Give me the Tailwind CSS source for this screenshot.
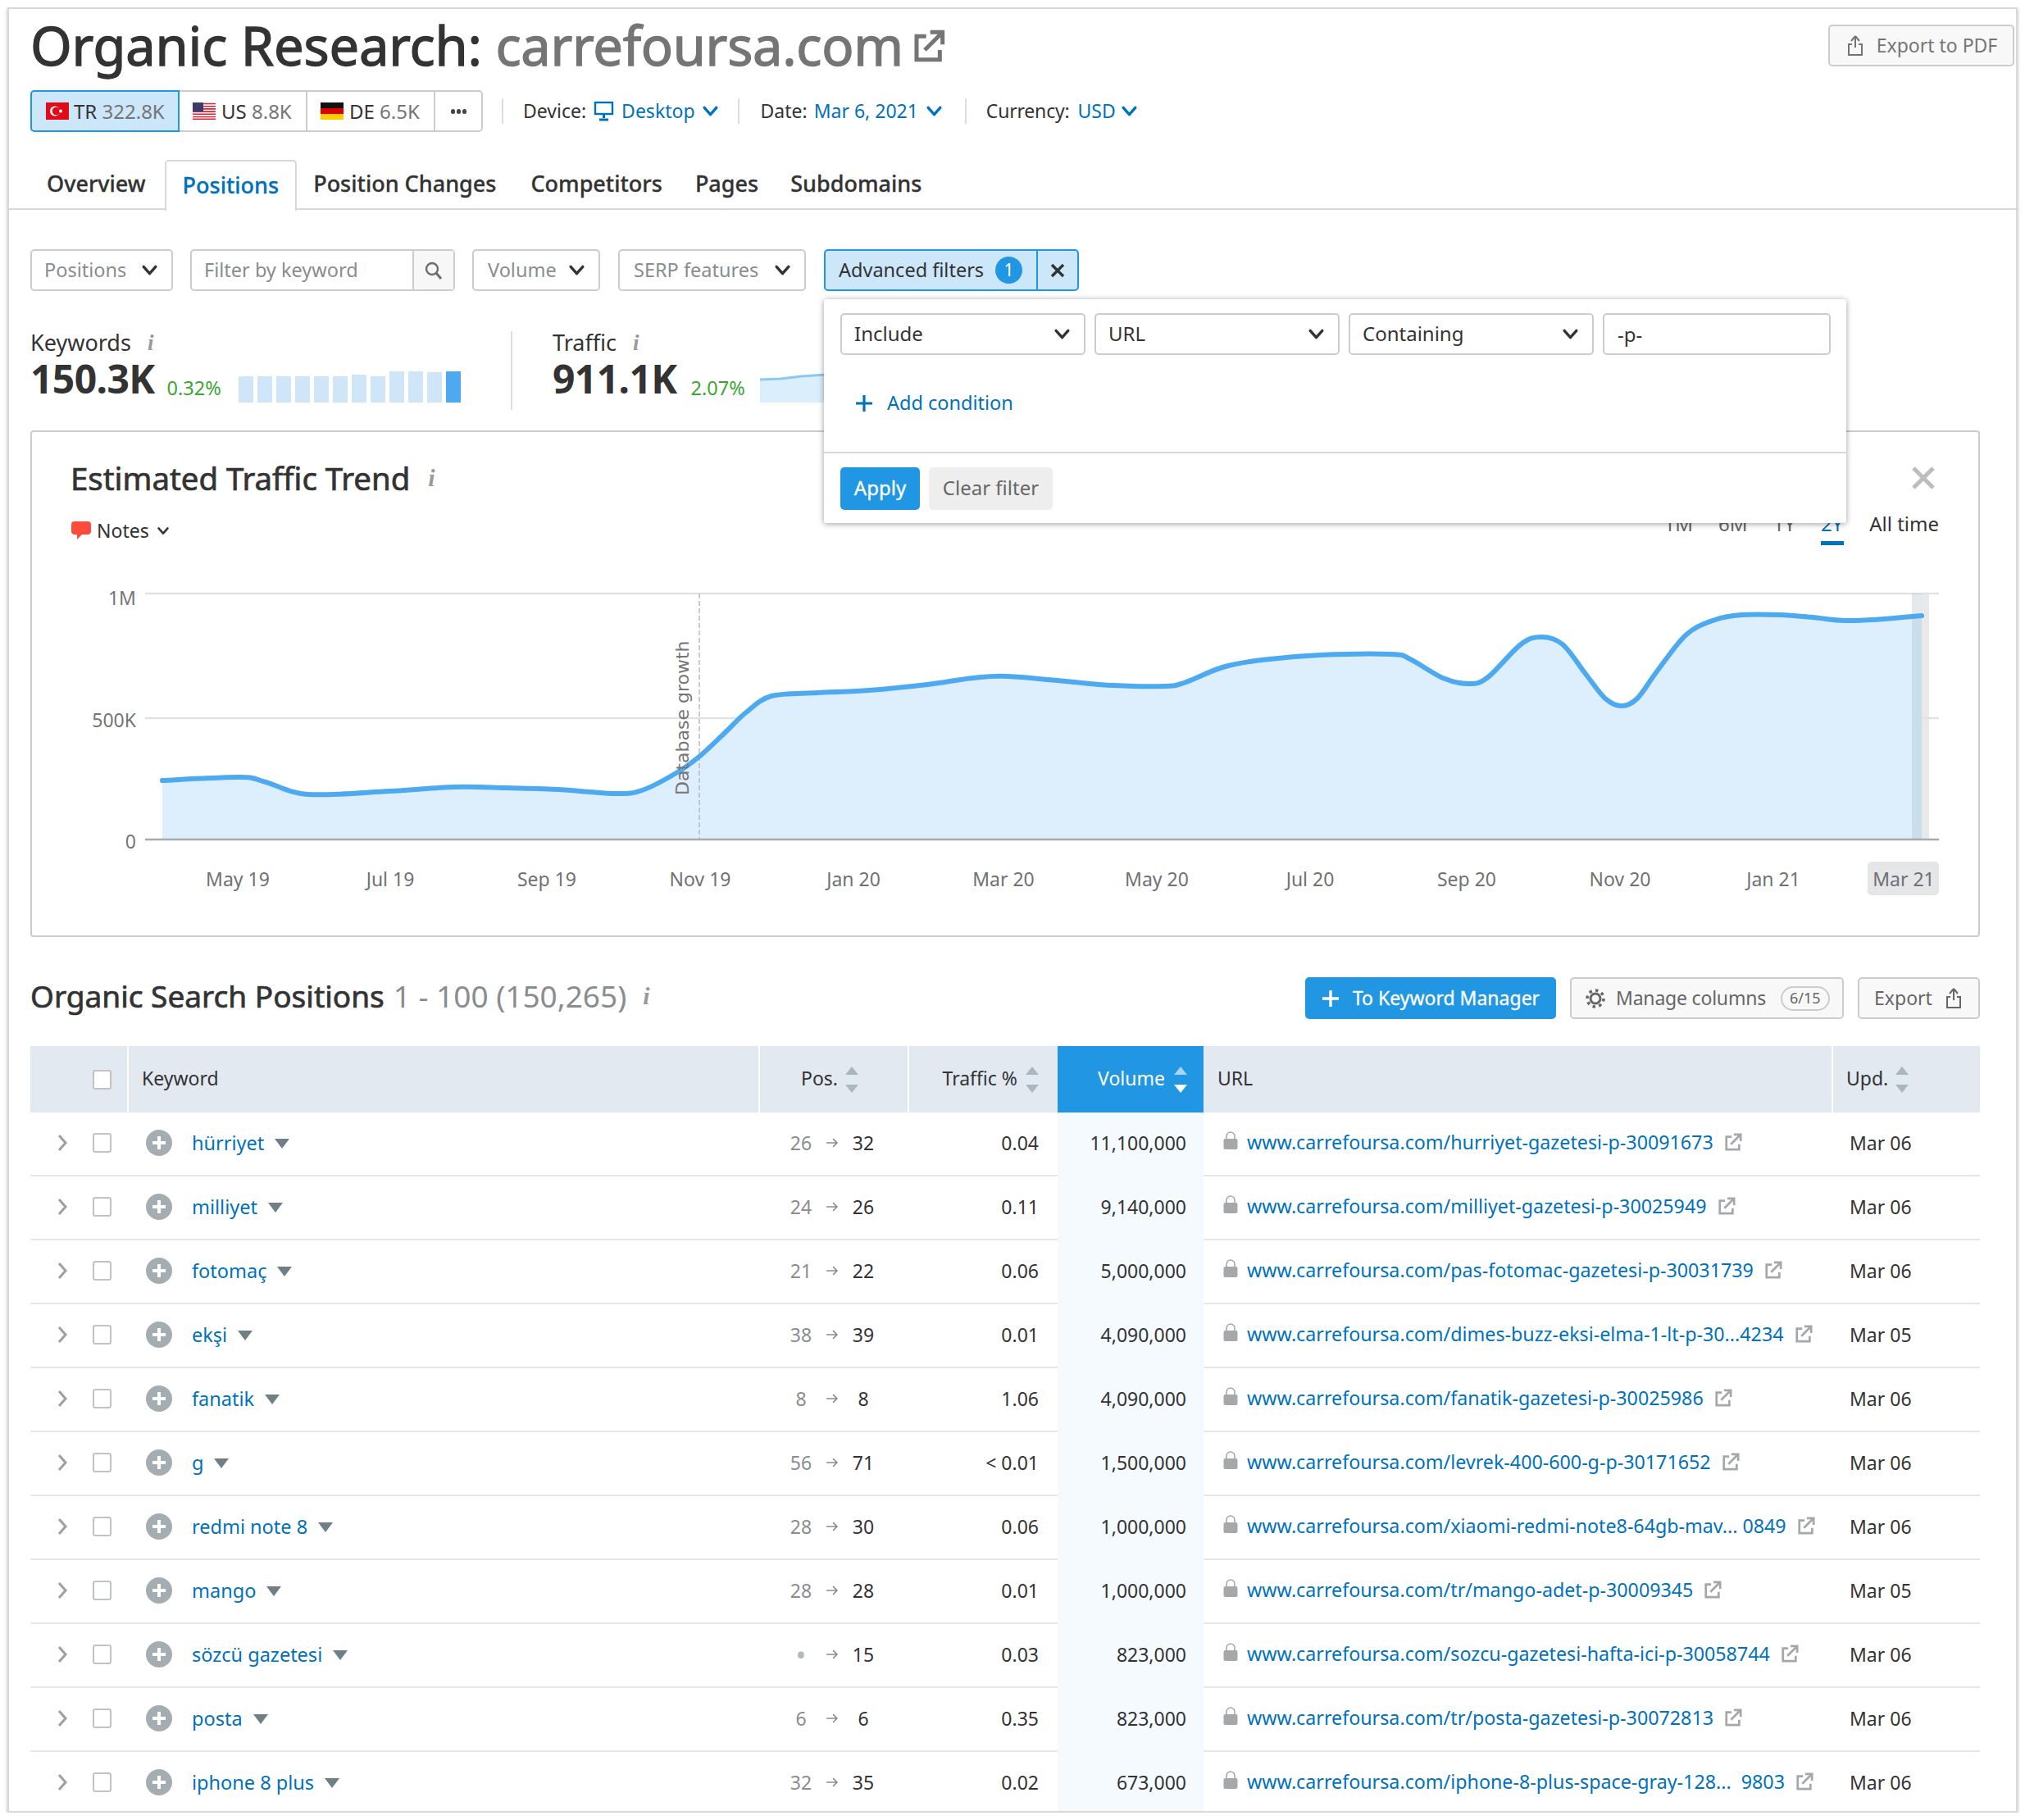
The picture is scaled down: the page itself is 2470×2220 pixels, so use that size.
<!DOCTYPE html>
<html lang="en">
<head>
    <meta charset="UTF-8">
    <title>Organic Research: carrefoursa.com</title>
    <script src="https://cdn.jsdelivr.net/npm/@tailwindcss/browser@4"></script>
</head>
<body class="bg-white text-[#333] font-['Noto_Sans',sans-serif]">

<!-- shared icons -->
<svg width="0" height="0" class="absolute">
    <symbol id="chev" viewBox="0 0 20 14"><path d="M3 3l7 8 7-8" fill="none" stroke="currentColor" stroke-width="3.2" stroke-linecap="round" stroke-linejoin="round"/></symbol>
    <symbol id="ext" viewBox="0 0 24 24"><path d="M10 5H3v17h17v-7" fill="none" stroke="currentColor" stroke-width="3"/><path d="M9 15L21 3M13 2h9v9" fill="none" stroke="currentColor" stroke-width="3"/></symbol>
    <symbol id="up" viewBox="0 0 24 28"><path d="M12 2l-5 6M12 2l5 6M12 2v14M8 12H4v13h16V12h-4" fill="none" stroke="currentColor" stroke-width="2"/></symbol>
    <symbol id="lock" viewBox="0 0 20 24"><path d="M5 11V7a5 5 0 0 1 10 0v4" fill="none" stroke="currentColor" stroke-width="1.6"/><rect x="1.5" y="10" width="17" height="13" rx="2" fill="currentColor"/></symbol>
</svg>

<div class="w-[2452px] h-[2202px] ml-[9px] mt-[9px] border-2 border-[#d8d8d8] shadow-[0_2px_4px_rgba(0,0,0,0.25)] overflow-hidden relative">

    <!-- Header -->
    <header class="pl-[26px] pr-[2px] pt-[19px] border-b-2 border-[#d8d8d8] h-[245px]">
        <div class="flex justify-between items-center h-[51px]">
            <h1 class="flex items-center text-[65px] tracking-[-0.2px] leading-none text-[#333] [-webkit-text-stroke:1.3px_currentColor]">
                Organic Research:&nbsp;<span class="text-[#757575] tracking-[-0.3px]">carrefoursa.com</span>
                <svg class="w-[40px] h-[40px] ml-[11px] text-[#757575]"><use href="#ext"/></svg>
            </h1>
            <button class="w-[227px] h-[51px] flex items-center justify-center gap-[14px] text-[23px] text-[#757575] bg-[#f8f8f8] border-2 border-[#ccc] rounded-[5px]">
                <svg class="w-[24px] h-[28px]"><use href="#up"/></svg>
                Export to PDF
            </button>
        </div>

        <div class="flex items-center mt-[29px] h-[51px] text-[23px]">
            <div class="flex h-full border-2 border-[#ccc] rounded-[5px] w-[552px] text-[24px]">
                <div class="w-[182px] -m-[2px] mr-0 flex items-center pl-[17px] gap-[6px] bg-[#cce6fa] border-2 border-[#2196e3] rounded-l-[5px]">
                    <svg class="w-[28px] h-[21px]" viewBox="0 0 28 21"><rect width="28" height="21" fill="#e30a17"/><circle cx="11" cy="10.5" r="6" fill="#fff"/><circle cx="12.5" cy="10.5" r="4.8" fill="#e30a17"/><circle cx="18" cy="10.5" r="2" fill="#fff"/></svg>
                    <span>TR <span class="text-[#757575]">322.8K</span></span>
                </div>
                <div class="w-[156px] flex items-center pl-[16px] gap-[7px] border-r-2 border-[#ccc]">
                    <svg class="w-[28px] h-[21px]" viewBox="0 0 28 21"><rect width="28" height="21" fill="#fff"/><path d="M0 1.5h28M0 4.7h28M0 7.9h28M0 11.1h28M0 14.3h28M0 17.5h28M0 20.3h28" stroke="#d3283c" stroke-width="1.6"/><rect width="13" height="11" fill="#3c3b6e"/></svg>
                    <span>US <span class="text-[#757575]">8.8K</span></span>
                </div>
                <div class="w-[156px] flex items-center pl-[16px] gap-[7px] border-r-2 border-[#ccc]">
                    <svg class="w-[28px] h-[21px]" viewBox="0 0 28 21"><rect width="28" height="7" fill="#111"/><rect y="7" width="28" height="7" fill="#dd0000"/><rect y="14" width="28" height="7" fill="#ffce00"/></svg>
                    <span>DE <span class="text-[#757575]">6.5K</span></span>
                </div>
                <div class="flex-1 flex items-center justify-center gap-[2px]">
                    <i class="w-[5px] h-[6px] rounded-full bg-[#444]"></i><i class="w-[5px] h-[6px] rounded-full bg-[#444]"></i><i class="w-[5px] h-[6px] rounded-full bg-[#444]"></i>
                </div>
            </div>
            <div class="w-[2px] h-[31px] bg-[#ddd] ml-[23px] mr-[24px]"></div>
            <span>Device:</span>
            <svg class="w-[25px] h-[25px] ml-[9px] mr-[9px] text-[#0071bc]" viewBox="0 0 25 25"><rect x="2" y="2" width="21" height="14" fill="none" stroke="currentColor" stroke-width="2.4"/><path d="M12.5 16v5M7 23h11" stroke="currentColor" stroke-width="3"/></svg>
            <span class="text-[#0071bc]">Desktop</span>
            <svg class="w-[21px] h-[15px] ml-[8px] text-[#0071bc]"><use href="#chev"/></svg>
            <div class="w-[2px] h-[31px] bg-[#ddd] ml-[23px] mr-[26px]"></div>
            <span>Date:</span>
            <span class="text-[#0071bc] ml-[8px]">Mar 6, 2021</span>
            <svg class="w-[21px] h-[15px] ml-[9px] text-[#0071bc]"><use href="#chev"/></svg>
            <div class="w-[2px] h-[31px] bg-[#ddd] ml-[27px] mr-[24px] shrink-0"></div>
            <span class="tracking-[-0.2px]">Currency:</span>
            <span class="text-[#0071bc] ml-[10px]">USD</span>
            <svg class="w-[21px] h-[15px] ml-[6px] text-[#0071bc]"><use href="#chev"/></svg>
        </div>

        <nav class="flex mt-[32px] h-[62px] items-end text-[27px] font-medium text-[#333] [-webkit-text-stroke:0.3px_currentColor]">
            <a class="pl-[20px] pr-[23px] pb-[2px] h-[60px] flex items-center">Overview</a>
            <a class="px-[20px] pb-[2px] h-[62px] -mb-[2px] flex items-center text-[#0071bc] bg-white border-2 border-b-0 border-[#d8d8d8] rounded-t-[5px]">Positions</a>
            <a class="pl-[20px] pr-[21px] pb-[2px] h-[60px] flex items-center">Position Changes</a>
            <a class="px-[21px] pb-[2px] h-[60px] flex items-center">Competitors</a>
            <a class="px-[19px] pb-[2px] h-[60px] flex items-center">Pages</a>
            <a class="px-[20px] pb-[2px] h-[60px] flex items-center">Subdomains</a>
        </nav>
    </header>

    <main class="pl-[26px] pr-[44px]">
        <!-- Filters -->
        <div class="flex mt-[48px] h-[51px] text-[23.5px] text-[#898d90]">
            <div class="w-[174px] flex items-center justify-between pl-[15px] pr-[16px] border-2 border-[#ccc] rounded-[5px]">Positions <svg class="w-[21px] h-[15px] text-[#333]"><use href="#chev"/></svg></div>
            <div class="w-[323px] ml-[21px] flex border-2 border-[#ccc] rounded-[5px]">
                <div class="flex-1 flex items-center pl-[15px]">Filter by keyword</div>
                <div class="w-[50px] flex items-center justify-center bg-[#f7f7f7] border-l-2 border-[#ccc]">
                    <svg class="w-[24px] h-[24px] text-[#6c6e6f]" viewBox="0 0 24 24"><circle cx="10" cy="10" r="7" fill="none" stroke="currentColor" stroke-width="2.4"/><path d="M15 15l6 7" stroke="currentColor" stroke-width="3"/></svg>
                </div>
            </div>
            <div class="w-[156px] ml-[21px] flex items-center justify-between pl-[17px] pr-[16px] border-2 border-[#ccc] rounded-[5px]">Volume <svg class="w-[21px] h-[15px] text-[#333]"><use href="#chev"/></svg></div>
            <div class="w-[229px] ml-[22px] flex items-center justify-between pl-[17px] pr-[16px] border-2 border-[#ccc] rounded-[5px]">SERP features <svg class="w-[21px] h-[15px] text-[#333]"><use href="#chev"/></svg></div>
            <div class="w-[311px] ml-[22px] flex bg-[#cce6fa] border-2 border-[#2196e3] rounded-[5px] text-[#333]">
                <div class="flex-1 flex items-center pl-[16px] gap-[14px]">Advanced filters <span class="w-[33px] h-[33px] rounded-full bg-[#2196e3] text-white text-[21px] flex items-center justify-center">1</span></div>
                <div class="w-[50px] flex items-center justify-center border-l-2 border-[#2196e3]">
                    <svg class="w-[20px] h-[20px]" viewBox="0 0 20 20"><path d="M3 3l14 14M17 3L3 17" stroke="#333" stroke-width="3.4"/></svg>
                </div>
            </div>
        </div>

        <!-- Stats -->
        <div class="flex mt-[49px] h-[96px]">
            <div class="w-[588px] border-r-2 border-[#ddd]">
                <div class="text-[27px] leading-[28px] flex items-center gap-[20px]">Keywords <span class="font-['Liberation_Serif',serif] italic font-bold text-[#999]">i</span></div>
                <div class="flex items-end mt-[7px]">
                    <span class="text-[48px] font-bold leading-[46px] tracking-[-0.6px]">150.3K</span>
                    <span class="text-[23.5px] text-[#3da535] ml-[15px] leading-[30px] w-[87px] -mb-[3px]">0.32%</span>
                    <div id="bars" class="flex items-end gap-[5px] h-[38px] -mb-[6px]"></div>
                </div>
            </div>
            <div class="pl-[49px] flex-1">
                <div class="text-[27px] leading-[28px] flex items-center gap-[20px]">Traffic <span class="font-['Liberation_Serif',serif] italic font-bold text-[#999]">i</span></div>
                <div class="flex items-end mt-[7px] relative">
                    <span class="text-[48px] font-bold leading-[46px] tracking-[-0.6px]">911.1K</span>
                    <span class="text-[23.5px] text-[#3da535] ml-[17px] leading-[30px] w-[84px] -mb-[3px]">2.07%</span>
                    <svg class="w-[80px] h-[38px] -mb-[6px]" viewBox="0 0 80 38"><path d="M0 10L25 9 50 6 80 4V38H0Z" fill="#dbeefc"/><path d="M0 10L25 9 50 6 80 4" fill="none" stroke="#8cc8f4" stroke-width="3"/></svg>
                </div>
            </div>
        </div>

        <!-- Estimated Traffic Trend -->
        <section class="mt-[25px] h-[618px] border-2 border-[#ccc] rounded-[4px]">
            <div class="flex justify-between h-[172px] pl-[47px] pr-[48px]">
                <div>
                    <h2 class="mt-[35px] text-[38.4px] leading-[42px] flex items-center gap-[22px] [-webkit-text-stroke:0.7px_currentColor]">Estimated Traffic Trend <span class="font-['Liberation_Serif',serif] italic font-bold text-[30px] text-[#999] [-webkit-text-stroke:0]">i</span></h2>
                    <div class="mt-[28px] flex items-center text-[23px] leading-[30px]">
                        <svg class="w-[26px] h-[26px] mr-[6px]" viewBox="0 0 26 26"><path d="M5 2h16a4 4 0 0 1 4 4v8a4 4 0 0 1-4 4h-7l-6 6v-6H5a4 4 0 0 1-4-4V6a4 4 0 0 1 4-4z" fill="#ff4b3a"/></svg>
                        Notes
                        <svg class="w-[16px] h-[11px] ml-[9px]"><use href="#chev"/></svg>
                    </div>
                </div>
                <div class="flex flex-col items-end">
                    <svg class="w-[30px] h-[30px] mt-[41px] mr-[4px] text-[#bdbdbd]" viewBox="0 0 30 30"><path d="M3 3l24 24M27 3L3 27" stroke="currentColor" stroke-width="5"/></svg>
                    <div class="mt-[26px] flex gap-[31px] text-[24px] leading-[30px]">
                        <span class="text-[#666]">1M</span><span class="text-[#666]">6M</span><span class="text-[#666]">1Y</span>
                        <span class="text-[#0071bc] relative">2Y<i class="absolute left-0 top-[36px] w-[28px] h-[5px] bg-[#0071bc]"></i></span>
                        <span class="ml-[1px]">All time</span>
                    </div>
                </div>
            </div>
            <svg id="chart" class="w-[2374px] h-[400px]" viewBox="39 700 2374 400" font-size="23" fill="#757575">
                <rect x="2278" y="1052" width="87" height="41" rx="5" fill="#e4e6e7"/>
                <path d="M177 725H2365M177 877H2365" stroke="#e2e2e2" stroke-width="2.5"/>
                <path id="area" fill="#dbeefc" fill-opacity="0.95"/>
                <rect x="2332" y="725" width="12" height="300" fill="#8fa6b8" fill-opacity="0.25"/>
                <rect x="2344" y="725" width="9" height="300" fill="#e2e4e6" fill-opacity="0.8"/>
                <path d="M853 725V1025" stroke="#bbb" stroke-width="1.5" stroke-dasharray="6 3"/>
                <path id="line" fill="none" stroke="#4eaaf0" stroke-width="6" stroke-linecap="round"/>
                <path d="M177 1025H2365" stroke="#a9acae" stroke-width="2.5"/>
                <text x="840" y="971" transform="rotate(-90 840 971)" font-family="DejaVu Sans" font-size="22" fill="#757575">Database growth</text>
                <g text-anchor="end">
                    <text x="166" y="739">1M</text><text x="166" y="888">500K</text><text x="166" y="1036">0</text>
                </g>
                <g text-anchor="middle" fill="#6f7173">
                    <text x="290" y="1082">May 19</text><text x="476" y="1082">Jul 19</text><text x="667" y="1082">Sep 19</text><text x="854" y="1082">Nov 19</text>
                    <text x="1041" y="1082">Jan 20</text><text x="1224" y="1082">Mar 20</text><text x="1411" y="1082">May 20</text><text x="1598" y="1082">Jul 20</text>
                    <text x="1789" y="1082">Sep 20</text><text x="1976" y="1082">Nov 20</text><text x="2163" y="1082">Jan 21</text><text x="2322" y="1082">Mar 21</text>
                </g>
            </svg>
        </section>

        <!-- Organic Search Positions -->
        <div class="flex items-center justify-between mt-[49px] h-[51px]">
            <h2 class="text-[37px] -mt-[6px] flex items-center [-webkit-text-stroke:0.7px_currentColor]">Organic Search Positions
                <span class="text-[#898d90] ml-[11px] [-webkit-text-stroke:0]">1 - 100 (150,265)</span>
                <span class="font-['Liberation_Serif',serif] italic font-bold text-[30px] text-[#999] ml-[20px] [-webkit-text-stroke:0]">i</span>
            </h2>
            <div class="flex gap-[17px] text-[23px] h-full">
                <button class="w-[306px] rounded-[5px] bg-[#2196e3] text-white flex items-center justify-center gap-[16px] [-webkit-text-stroke:0.3px_currentColor]">
                    <svg class="w-[22px] h-[22px]" viewBox="0 0 22 22"><path d="M11 1v20M1 11h20" stroke="#fff" stroke-width="3.4"/></svg>
                    To Keyword Manager
                </button>
                <button class="w-[334px] rounded-[5px] border-2 border-[#ccc] bg-[#f8f8f8] text-[#666] flex items-center pl-[16px] gap-[12px]">
                    <svg class="w-[26px] h-[26px]" viewBox="0 0 26 26"><circle cx="13" cy="13" r="6" fill="none" stroke="#666" stroke-width="3"/><circle cx="13" cy="13" r="10" fill="none" stroke="#666" stroke-width="3.5" stroke-dasharray="3.5 4.3"/></svg>
                    <span class="tracking-[-0.2px]">Manage columns</span>
                    <span class="ml-[6px] px-[9px] h-[30px] rounded-full border-2 border-[#ccc] text-[18px] flex items-center">6/15</span>
                </button>
                <button class="w-[149px] rounded-[5px] border-2 border-[#ccc] bg-[#f8f8f8] text-[#666] flex items-center justify-center gap-[14px]">
                    Export
                    <svg class="w-[24px] h-[28px]"><use href="#up"/></svg>
                </button>
            </div>
        </div>

        <!-- Positions table -->
        <div class="mt-[33px] w-[2378px]">
            <div class="grid grid-cols-[120px_768px_182px_183px_178px_766px_181px] h-[81px] bg-[#e2e9f1] text-[23px] text-[#333] pb-[2px]">
                <div class="flex items-center pl-[76px] border-r-2 border-white -mb-[2px]"><span class="w-[23px] h-[24px] bg-white border-2 border-[#bfc3c6] rounded-[3px]"></span></div>
                <div class="flex items-center pl-[16px]">Keyword</div>
                <div class="flex items-center pl-[50px] gap-[7px] border-l-2 border-white -mb-[2px]"><span class="-mt-[2px]">Pos.</span>
                    <svg class="w-[20px] h-[34px]" viewBox="0 0 20 34"><path d="M10 1l8 10H2zM10 33l8-10H2z" fill="#a9b7c2"/></svg></div>
                <div class="flex items-center justify-end pr-[21px] gap-[8px] border-l-2 border-white -mb-[2px]"><span class="-mt-[2px]">Traffic %</span>
                    <svg class="w-[20px] h-[34px]" viewBox="0 0 20 34"><path d="M10 1l8 10H2zM10 33l8-10H2z" fill="#a9b7c2"/></svg></div>
                <div class="flex items-center justify-end pr-[18px] gap-[9px] bg-[#2196e3] text-white -mb-[2px]"><span class="-mt-[2px]">Volume</span>
                    <svg class="w-[20px] h-[34px]" viewBox="0 0 20 34"><path d="M10 1l8 10H2z" fill="#a8d6f5"/><path d="M10 33l8-10H2z" fill="#fff"/></svg></div>
                <div class="flex items-center pl-[17px]">URL</div>
                <div class="flex items-center pl-[16px] gap-[7px] border-l-2 border-white -mb-[2px]"><span class="-mt-[2px]">Upd.</span>
                    <svg class="w-[20px] h-[34px]" viewBox="0 0 20 34"><path d="M10 1l8 10H2zM10 33l8-10H2z" fill="#a9b7c2"/></svg></div>
            </div>
            <div id="rows"></div>
        </div>
    </main>

    <!-- Advanced filters dropdown -->
    <div class="absolute left-[994px] top-[354px] w-[1247px] h-[273px] bg-white rounded-[3px] shadow-[0_1px_7px_rgba(0,0,0,0.4)] text-[24px] z-10">
        <div class="flex gap-[11px] pl-[20px] pt-[17px] h-[188px] border-b-2 border-[#d8d8d8]">
            <div class="w-[299px] h-[51px] flex items-center justify-between pl-[15px] pr-[16px] border-2 border-[#ccc] rounded-[5px]"><span class="-mt-[2px]">Include</span> <svg class="w-[21px] h-[15px]"><use href="#chev"/></svg></div>
            <div class="w-[299px] h-[51px] flex items-center justify-between pl-[15px] pr-[16px] border-2 border-[#ccc] rounded-[5px]"><span class="-mt-[2px]">URL</span> <svg class="w-[21px] h-[15px]"><use href="#chev"/></svg></div>
            <div class="w-[299px] h-[51px] flex items-center justify-between pl-[15px] pr-[16px] border-2 border-[#ccc] rounded-[5px]"><span class="-mt-[2px]">Containing</span> <svg class="w-[21px] h-[15px]"><use href="#chev"/></svg></div>
            <div class="w-[278px] h-[51px] flex items-center pl-[16px] border-2 border-[#ccc] rounded-[5px]">-p-</div>
        </div>
        <div class="absolute left-[38px] top-[110px] flex items-center gap-[17px] text-[23.5px] text-[#0071bc] h-[34px]">
            <svg class="w-[22px] h-[22px]" viewBox="0 0 22 22"><path d="M11 1v20M1 11h20" stroke="currentColor" stroke-width="3.2"/></svg>
            Add condition
        </div>
        <div class="flex gap-[11px] pl-[20px] pt-[17px]">
            <button class="w-[97px] h-[52px] rounded-[5px] bg-[#2196e3] text-white [-webkit-text-stroke:0.3px_currentColor]"><span class="block -mt-[2px]">Apply</span></button>
            <button class="w-[151px] h-[52px] rounded-[5px] bg-[#eeeeee] text-[#666]"><span class="block -mt-[2px]">Clear filter</span></button>
        </div>
    </div>
</div>

<script>
    // keyword sparkline bars
    const barTops = [6, 6, 6, 6, 6, 6, 4, 6, 0, 0, 1, 0];
    document.getElementById('bars').innerHTML = barTops.map((t, i) =>
        `<i class="w-[18px] ${i === 11 ? 'bg-[#4eaaf0]' : 'bg-[#cfe6f9]'}" style="height:${38 - t}px"></i>`).join('');

    // traffic curve, points read off the chart
    const pts = [[198,953],[293,949],[324,955],[376,970],[475,966],[554,961],[617,962],[680,964],[752,969],[783,965],[823,945],[854,923],[886,893],[910,870],[941,850],[997,846],[1060,843],[1131,836],[1187,828],[1230,826],[1309,833],[1357,837],[1420,838],[1444,834],[1491,815],[1539,806],[1610,800],[1697,799],[1720,805],[1760,828],[1792,835],[1815,827],[1855,787],[1880,778],[1906,787],[1934,823],[1958,853],[1978,862],[1997,853],[2021,820],[2057,775],[2092,757],[2124,751],[2171,751],[2211,754],[2251,758],[2298,756],[2344,752]];
    let d = `M${pts[0][0]} ${pts[0][1]}`;
    for (let i = 0; i < pts.length - 1; i++) {
        const p0 = pts[i - 1] || pts[i], p1 = pts[i], p2 = pts[i + 1], p3 = pts[i + 2] || p2;
        d += `C${p1[0] + (p2[0] - p0[0]) / 6} ${p1[1] + (p2[1] - p0[1]) / 6} ${p2[0] - (p3[0] - p1[0]) / 6} ${p2[1] - (p3[1] - p1[1]) / 6} ${p2[0]} ${p2[1]}`;
    }
    document.getElementById('line').setAttribute('d', d);
    document.getElementById('area').setAttribute('d', d + 'V1025H198Z');

    // table rows
    const rows = [
        ['hürriyet', '26', '32', '0.04', '11,100,000', '/hurriyet-gazetesi-p-30091673', 'Mar 06'],
        ['milliyet', '24', '26', '0.11', '9,140,000', '/milliyet-gazetesi-p-30025949', 'Mar 06'],
        ['fotomaç', '21', '22', '0.06', '5,000,000', '/pas-fotomac-gazetesi-p-30031739', 'Mar 06'],
        ['ekşi', '38', '39', '0.01', '4,090,000', '/dimes-buzz-eksi-elma-1-lt-p-30...4234', 'Mar 05'],
        ['fanatik', '8', '8', '1.06', '4,090,000', '/fanatik-gazetesi-p-30025986', 'Mar 06'],
        ['g', '56', '71', '< 0.01', '1,500,000', '/levrek-400-600-g-p-30171652', 'Mar 06'],
        ['redmi note 8', '28', '30', '0.06', '1,000,000', '/xiaomi-redmi-note8-64gb-mav... 0849', 'Mar 06'],
        ['mango', '28', '28', '0.01', '1,000,000', '/tr/mango-adet-p-30009345', 'Mar 05'],
        ['sözcü gazetesi', '•', '15', '0.03', '823,000', '/sozcu-gazetesi-hafta-ici-p-30058744', 'Mar 06'],
        ['posta', '6', '6', '0.35', '823,000', '/tr/posta-gazetesi-p-30072813', 'Mar 06'],
        ['iphone 8 plus', '32', '35', '0.02', '673,000', '/iphone-8-plus-space-gray-128...&nbsp; 9803', 'Mar 06'],
    ];
    document.getElementById('rows').innerHTML = rows.map(r => `
        <div class="grid grid-cols-[119px_769px_182px_183px_178px_766px_181px] h-[78px] border-b-2 border-[#e6e6e6] text-[23px]">
            <div class="flex items-center pl-[32px]">
                <svg class="w-[14px] h-[24px] -mt-[2px] text-[#9aa0a4]" viewBox="0 0 14 24"><path d="M3 3l8 9-8 9" fill="none" stroke="currentColor" stroke-width="3"/></svg>
                <span class="w-[23px] h-[24px] ml-[30px] -mt-[2px] border-2 border-[#bfc3c6] rounded-[3px]"></span>
            </div>
            <div class="flex items-center pl-[22px]">
                <svg class="w-[32px] h-[32px] -mt-[2px]" viewBox="0 0 32 32"><circle cx="16" cy="16" r="16" fill="#a4adb2"/><path d="M16 8v16M8 16h16" stroke="#fff" stroke-width="4"/></svg>
                <a class="ml-[24px] text-[#0071bc] text-[23.5px]">${r[0]}</a>
                <svg class="w-[18px] h-[12px] ml-[13px]" viewBox="0 0 18 12"><path d="M0 0h18L9 12z" fill="#6f7f86"/></svg>
            </div>
            <div class="grid grid-cols-[66px_16px_60px] items-center pl-[16px] pb-[2px] text-center">
                <span class="text-[#898d90] pl-[6px] ${r[1] === '•' ? 'text-[34px] leading-none text-[#b4b8ba]' : ''}">${r[1]}</span>
                <svg class="w-[16px] h-[14px] mx-auto text-[#898d90]" viewBox="0 0 16 14"><path d="M1 7h13M9 2l5 5-5 5" fill="none" stroke="currentColor" stroke-width="1.6"/></svg>
                <span>${r[2]}</span>
            </div>
            <div class="flex items-center justify-end pr-[23px] pb-[2px]">${r[3].replace('<', '&lt;')}</div>
            <div class="flex items-center justify-end pr-[21px] pb-[4px] bg-[#f4fafe] -mb-[2px]">${r[4]}</div>
            <div class="flex items-center pl-[23px]">
                <svg class="w-[20px] h-[24px] -mt-[8px] text-[#a5a8aa]"><use href="#lock"/></svg>
                <a class="ml-[10px] text-[#0071bc] text-[23.25px] -mt-[4px]">www.carrefoursa.com${r[5]}</a>
                <svg class="w-[22px] h-[22px] ml-[13px] -mt-[4px] text-[#a5a8aa]"><use href="#ext"/></svg>
            </div>
            <div class="flex items-center pl-[22px] pb-[2px]">${r[6]}</div>
        </div>`).join('');
</script>
</body>
</html>
